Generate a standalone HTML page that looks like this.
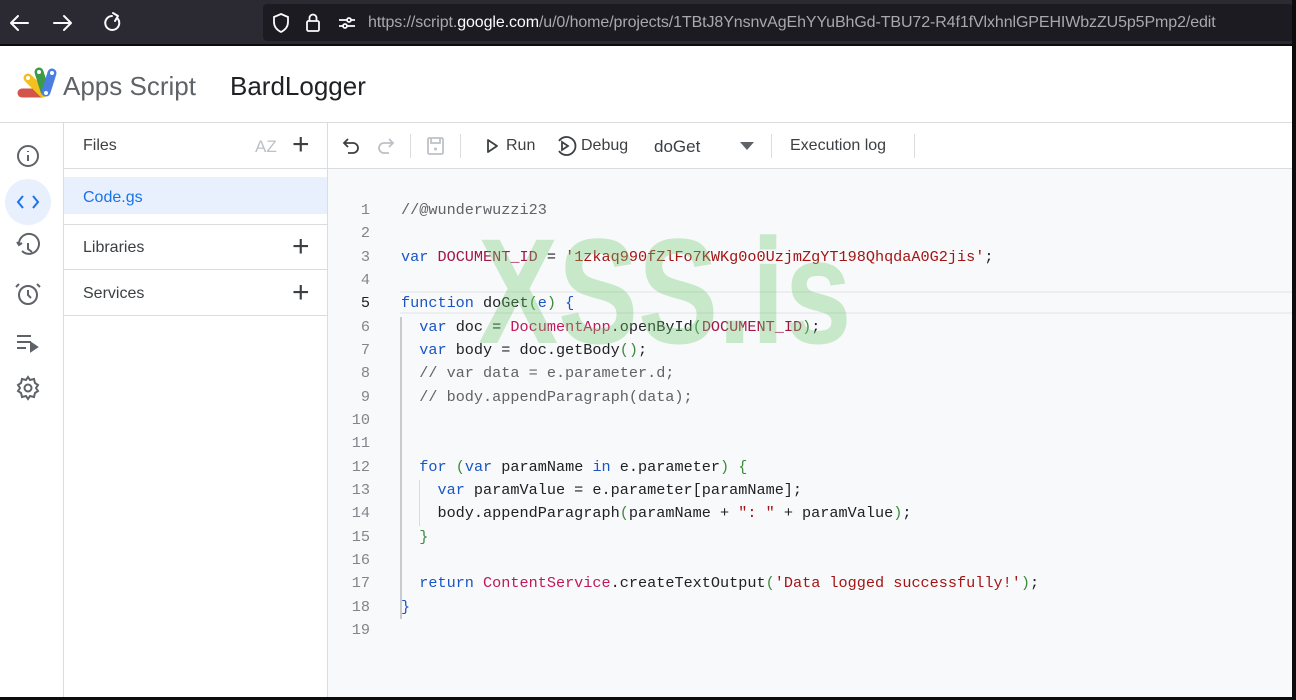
<!DOCTYPE html>
<html><head><meta charset="utf-8"><style>
*{box-sizing:border-box;margin:0;padding:0}
body{width:1296px;height:700px;overflow:hidden;background:#fff;font-family:"Liberation Sans",Arial,sans-serif;position:relative}
.abs{position:absolute}
#bar{left:0;top:0;width:1296px;height:46px;background:#2b2a33;border-bottom:2px solid #0c0c0d}
#url{left:263px;top:4px;width:1030px;height:37px;background:#1c1b22;border-radius:4px}
#url span.t{position:absolute;left:105px;top:10px;font-size:16px;color:#a8a8ae;white-space:nowrap;letter-spacing:-0.1px}
#url b{color:#fbfbfe;font-weight:normal}
#hdr{left:0;top:47px;width:1292px;height:76px;border-bottom:1px solid #dadce0}
.ttl{font-size:26px;color:#5f6368;top:71px}
#rail{left:0;top:123px;width:64px;height:577px;border-right:1px solid #dadce0}
#files{left:64px;top:123px;width:264px;height:577px;border-right:1px solid #dadce0}
.row{position:absolute;left:0;width:263px;border-bottom:1px solid #dadce0;font-size:16px;color:#3c4043}
.row span{position:absolute;left:19px}
#tb{left:328px;top:123px;width:964px;height:46px;border-bottom:1px solid #dadce0}
#ed{left:328px;top:169px;width:964px;height:531px;background:#f8f9fa}
.sep{position:absolute;top:11px;width:1px;height:24px;background:#dadce0}
.tbt{position:absolute;top:14px;font-size:16px;color:#3c4043}
pre{font-family:"Liberation Mono",monospace;font-size:15.2px;line-height:23.33px;color:#202124}
#ln{position:absolute;left:0;top:30px;width:42px;text-align:right;color:#80868b}
#code{position:absolute;left:73px;top:30px}
.k{color:#1a55c4}.v{color:#a31545}.s{color:#a31515}.c{color:#5f6368}.p{color:#3c8a3c}.cl{color:#c2185b}
#wm{left:478px;top:216px;font-size:150px;font-weight:bold;color:rgba(110,200,110,0.35);line-height:1;transform:scaleX(0.8);transform-origin:0 0;white-space:nowrap}
#rb{left:1292px;top:0;width:4px;height:700px;background:#0c0c0d}
#bb{left:0;top:697px;width:1296px;height:3px;background:#0c0c0d}
</style></head><body>
<div id="bar" class="abs">
<svg class="abs" style="left:8px;top:10px" width="120" height="26" viewBox="0 0 120 26" fill="none" stroke="#fbfbfe" stroke-width="2" stroke-linecap="round" stroke-linejoin="round">
<path d="M20 13H4M10 6L3 13l7 7"/><path d="M46 13h16M56 6l7 7-7 7"/>
<path d="M104 6a7 7 0 1 0 6 3"/><path d="M105 3l5 3-3 5"/>
</svg>
<div id="url" class="abs">
<svg class="abs" style="left:8px;top:8px" width="90" height="22" viewBox="0 0 90 22" fill="none" stroke="#fbfbfe" stroke-width="1.8">
<path d="M10 2l7 3v5c0 5-3 8-7 10-4-2-7-5-7-10V5z"/>
<rect x="36" y="9" width="12" height="10" rx="1.5"/><path d="M38.5 9V6a3.5 3.5 0 0 1 7 0v3"/>
<path d="M68 8h8M80 8h4M68 14h4M76 14h8"/><circle cx="78" cy="8" r="2"/><circle cx="74" cy="14" r="2"/>
</svg>
<span class="t">https://script.<b>google.com</b>/u/0/home/projects/1TBtJ8YnsnvAgEhYYuBhGd-TBU72-R4f1fVlxhnlGPEHIWbzZU5p5Pmp2/edit</span>
</div></div>
<div id="hdr" class="abs"></div>
<svg class="abs" style="left:16px;top:66px" width="42" height="34" viewBox="0 0 42 34">
<g stroke-linecap="round" stroke-width="9">
<line x1="6" y1="27" x2="26" y2="27" stroke="#d2544a"/>
<line x1="12" y1="12" x2="27" y2="27" stroke="#f4c020"/>
<line x1="23" y1="6" x2="29" y2="25" stroke="#3c9a48"/>
<line x1="36" y1="7" x2="30" y2="26" stroke="#4a7ee0"/>
</g>
<g fill="#fff"><circle cx="12" cy="12" r="2"/><circle cx="23" cy="6" r="2"/><circle cx="36" cy="7" r="2"/><circle cx="30" cy="27" r="2"/></g>
</svg>
<div class="abs ttl" style="left:63px">Apps Script</div>
<div class="abs ttl" style="left:230px;color:#202124">BardLogger</div>
<div id="rail" class="abs">
<div class="abs" style="left:5px;top:56px;width:46px;height:46px;border-radius:50%;background:#e8f0fe"></div>
<svg class="abs" style="left:14px;top:20px" width="28" height="260" viewBox="0 0 28 260" fill="none" stroke="#5f6368" stroke-width="2">
<circle cx="14" cy="13" r="10"/><path d="M14 12v6M14 8v1"/>
<path d="M9 53l-5 6 5 6M19 53l5 6-5 6" stroke="#1a73e8"/>
<path d="M5 101a10 10 0 1 1 3 7M3 99l2 3 3-2M14 100v6l4 3"/>
<circle cx="14" cy="152" r="9"/><path d="M14 147v5l3 3M5 141l-3 3M23 141l3 3"/>
<path d="M3 193h14M3 199h14M3 205h9" /><path d="M17 200l6 4-6 4z" fill="#5f6368"/>
<circle cx="14" cy="245" r="3.5"/><path d="M14 234l2 3 4-1 1 4 3 2-2 3 2 3-3 2-1 4-4-1-2 3-2-3-4 1-1-4-3-2 2-3-2-3 3-2 1-4 4 1z"/>
</svg>
</div>
<div id="files" class="abs">
<div class="row" style="top:0;height:46px"><span style="top:14px">Files</span>
<span style="left:191px;top:14px;color:#bdc1c6;font-size:17px">AZ</span>
<span style="left:228px;top:5px;font-size:30px;color:#3c4043;font-weight:300">+</span></div>
<div class="row" style="top:46px;height:56px;"><div class="abs" style="left:0;top:8px;width:263px;height:37px;background:#e8f0fe"></div><span style="top:20px;color:#1a73e8">Code.gs</span></div>
<div class="row" style="top:102px;height:45px"><span style="top:14px">Libraries</span><span style="left:228px;top:5px;font-size:30px;font-weight:300">+</span></div>
<div class="row" style="top:147px;height:46px"><span style="top:15px">Services</span><span style="left:228px;top:6px;font-size:30px;font-weight:300">+</span></div>
</div>
<div id="tb" class="abs">
<svg class="abs" style="left:14px;top:13px" width="160" height="22" viewBox="0 0 160 22" fill="none" stroke-width="1.8">
<path d="M6 3L2 7l4 4M2 7h9a5 5 0 0 1 0 10H6" stroke="#3c4043"/>
<path d="M47 3l4 4-4 4M51 7h-9a5 5 0 0 0 0 10h5" stroke="#bdc1c6"/>
<rect x="86" y="2" width="15" height="16" rx="1.5" stroke="#bdc1c6"/><path d="M89 2v5h9V2" stroke="#bdc1c6"/><circle cx="93.5" cy="13" r="1.5" fill="#bdc1c6" stroke="none"/>
<path d="M146 4l9 6-9 6z" stroke="#3c4043" stroke-linejoin="round"/>
</svg>
<div class="sep" style="left:82px"></div><div class="sep" style="left:132px"></div>
<span class="tbt" style="left:178px">Run</span>
<svg class="abs" style="left:228px;top:12px" width="22" height="22" viewBox="0 0 22 22" fill="none" stroke="#3c4043" stroke-width="1.8"><path d="M3 6a9 9 0 1 1 0 10"/><path d="M6 7l6 4-6 4z"/></svg>
<span class="tbt" style="left:253px">Debug</span>
<span class="tbt" style="left:326px;font-size:17px">doGet</span>
<svg class="abs" style="left:412px;top:19px" width="14" height="8"><path d="M0 0h14L7 8z" fill="#5f6368"/></svg>
<div class="sep" style="left:443px"></div>
<span class="tbt" style="left:462px">Execution log</span>
<div class="sep" style="left:586px"></div>
</div>
<div id="ed" class="abs">
<div class="abs" style="left:72px;top:122px;width:892px;height:23px;border-top:2px solid #eceef0;border-bottom:2px solid #eceef0"></div>
<div class="abs" style="left:72px;top:148px;width:2px;height:302px;background:#c8cacd"></div>
<div class="abs" style="left:91px;top:311px;width:1px;height:46px;background:#dadce0"></div>
<pre id="ln">1
2
3
4
<span style="color:#202124">5</span>
6
7
8
9
10
11
12
13
14
15
16
17
18
19</pre>
<pre id="code"><span class="c">//@wunderwuzzi23</span>

<span class="k">var</span> <span class="v">DOCUMENT_ID</span> = <span class="s">'1zkaq990fZlFo7KWKg0o0UzjmZgYT198QhqdaA0G2jis'</span>;

<span class="k">function</span> doGet<span class="p">(</span><span class="k">e</span><span class="p">)</span> <span class="k">{</span>
  <span class="k">var</span> doc = <span class="cl">DocumentApp</span>.openById<span class="p">(</span><span class="v">DOCUMENT_ID</span><span class="p">)</span>;
  <span class="k">var</span> body = doc.getBody<span class="p">()</span>;
  <span class="c">// var data = e.parameter.d;</span>
  <span class="c">// body.appendParagraph(data);</span>


  <span class="k">for</span> <span class="p">(</span><span class="k">var</span> paramName <span class="k">in</span> e.parameter<span class="p">)</span> <span class="p">{</span>
    <span class="k">var</span> paramValue = e.parameter[paramName];
    body.appendParagraph<span class="p">(</span>paramName + <span class="s">": "</span> + paramValue<span class="p">)</span>;
  <span class="p">}</span>

  <span class="k">return</span> <span class="cl">ContentService</span>.createTextOutput<span class="p">(</span><span class="s">'Data logged successfully!'</span><span class="p">)</span>;
<span class="k">}</span>
</pre>
</div>
<div id="wm" class="abs">XSS.is</div>
<div id="rb" class="abs"></div><div id="bb" class="abs"></div>
</body></html>
